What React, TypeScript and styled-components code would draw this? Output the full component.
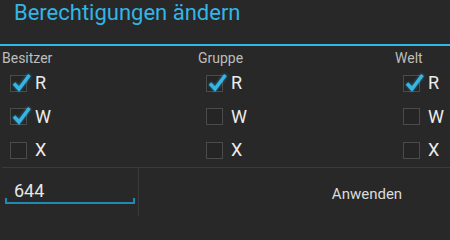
import React from "react";
import styled, { createGlobalStyle } from "styled-components";

const GlobalStyle = createGlobalStyle`
  html, body {
    margin: 0;
    padding: 0;
    background: #282828;
  }
  body {
    font-family: Roboto, "Noto Sans", "Liberation Sans", sans-serif;
    width: 450px;
    height: 216px;
    overflow: hidden;
  }
`;

type Perm = { label: string; checked: boolean };

const columns: { title: string; perms: Perm[] }[] = [
  {
    title: "Besitzer",
    perms: [
      { label: "R", checked: true },
      { label: "W", checked: true },
      { label: "X", checked: false },
    ],
  },
  {
    title: "Gruppe",
    perms: [
      { label: "R", checked: true },
      { label: "W", checked: false },
      { label: "X", checked: false },
    ],
  },
  {
    title: "Welt",
    perms: [
      { label: "R", checked: true },
      { label: "W", checked: false },
      { label: "X", checked: false },
    ],
  },
];

const CheckBox = ({ checked }: { checked: boolean }) => (
  <Box>
    {checked && (
      <CheckMark width="22" height="20" viewBox="0 0 22 20">
        <path d="M4 11.5 L9 17 L19.5 3" fill="none" stroke="#33b5e5" strokeWidth="3.4" />
      </CheckMark>
    )}
  </Box>
);

const App = () => {
  return (
    <Dialog>
      <GlobalStyle />
      <TitleBar>Berechtigungen ändern</TitleBar>
      <Grid>
        {columns.map((col) => (
          <Column key={col.title}>
            <Header>{col.title}</Header>
            {col.perms.map((p) => (
              <PermRow key={p.label}>
                <CheckBox checked={p.checked} />
                <PermLabel>{p.label}</PermLabel>
              </PermRow>
            ))}
          </Column>
        ))}
      </Grid>
      <Footer>
        <InputCell>
          <ModeInput>644</ModeInput>
        </InputCell>
        <ApplyButton>Anwenden</ApplyButton>
      </Footer>
    </Dialog>
  );
};

export default App;

const Dialog = styled.div`
  width: 450px;
  height: 216px;
  background: #282828;
  display: flex;
  flex-direction: column;
`;

const TitleBar = styled.div`
  height: 44px;
  padding-left: 14px;
  font-size: 22px;
  line-height: 26px;
  color: #33b5e5;
  border-bottom: 2px solid #33b5e5;
  box-sizing: content-box;
  white-space: nowrap;
`;

const Grid = styled.div`
  display: grid;
  grid-template-columns: 196px 197px 1fr;
  padding: 4px 0 0 2px;
  height: 117px;
  box-sizing: content-box;
`;

const Column = styled.div`
  display: flex;
  flex-direction: column;
`;

const Header = styled.div`
  font-size: 14px;
  line-height: 16.5px;
  height: 16.5px;
  color: #bdbdbd;
`;

const PermRow = styled.div`
  height: 33.5px;
  display: flex;
  align-items: center;
  padding-left: 8px;
`;

const Box = styled.div`
  position: relative;
  width: 15px;
  height: 15px;
  border: 1px solid #4b4b4b;
  background: #252525;
`;

const CheckMark = styled.svg`
  position: absolute;
  left: -1px;
  top: -4px;
  filter: drop-shadow(0 0 1.5px rgba(51, 181, 229, 0.6));
`;

const PermLabel = styled.span`
  margin-left: 8px;
  font-size: 18px;
  line-height: 20px;
  color: #ececec;
`;

const Footer = styled.div`
  display: flex;
  height: 48px;
  border-top: 1px solid #3a3a3a;
  margin-left: 2px;
`;

const InputCell = styled.div`
  width: 133px;
  border-right: 1px solid #3a3a3a;
  padding: 12px 0 0 3px;
  box-sizing: content-box;
`;

const ModeInput = styled.div`
  position: relative;
  width: 130px;
  height: 24px;
  padding-left: 9px;
  box-sizing: border-box;
  font-size: 18px;
  line-height: 22px;
  color: #e6e6e6;
  border-bottom: 2px solid #1f8ab3;
  &::before,
  &::after {
    content: "";
    position: absolute;
    bottom: 0;
    width: 2px;
    height: 4px;
    background: #1f8ab3;
  }
  &::before {
    left: 0;
  }
  &::after {
    right: 0;
  }
`;

const ApplyButton = styled.div`
  flex: 1;
  display: flex;
  align-items: center;
  justify-content: center;
  padding: 4px 0 0 145px;
  font-size: 15px;
  line-height: 18px;
  color: #dcdcdc;
`;
